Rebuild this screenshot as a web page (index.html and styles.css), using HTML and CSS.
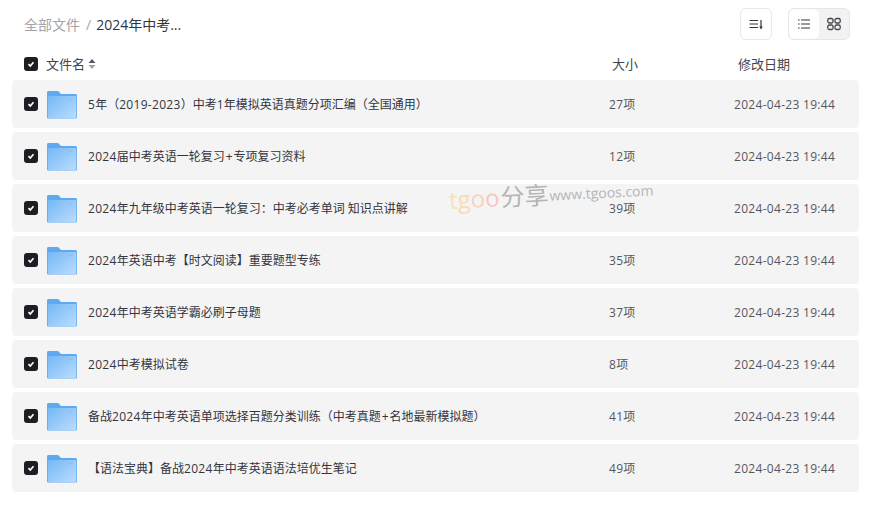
FILE: index.html
```html
<!DOCTYPE html>
<html lang="zh-CN">
<head>
<meta charset="utf-8">
<title>文件列表</title>
<link rel="stylesheet" href="styles.css">
</head>
<body>
<svg class="defs" width="0" height="0" aria-hidden="true">
  <defs>
    <linearGradient id="fg" x1="0" y1="0" x2="1" y2="1">
      <stop offset="0" stop-color="#74b8f6"/>
      <stop offset="1" stop-color="#bbdcfd"/>
    </linearGradient>
    <symbol id="folder" viewBox="0 0 30 30">
      <path d="M0 2.500C0 1.500.7 1 1.500 1h8.800c.7 0 1.200.3 1.700.8L14 4h14.500c.9 0 1.500.6 1.500 1.500V27c0 1-.6 1.600-1.500 1.600h-27C.6 28.600 0 28 0 27z" fill="#5eaaf0"/>
      <path d="M.8 7.300c0-.8.5-1.300 1.300-1.300h26.400c.5 0 .8.300.8.800V27c0 .7-.4 1-1 1H2c-.7 0-1.200-.4-1.200-1.100z" fill="url(#fg)"/>
      <rect x="22" y="8.500" width="4" height="2" fill="#8cc3f5"/>
    </symbol>
    <symbol id="check" viewBox="0 0 14 14">
      <path d="M4.500 7.200l1.800 1.800L9.500 5.300" fill="none" stroke="#fff" stroke-width="1.700"/>
    </symbol>
  </defs>
</svg>
<main class="page">
  <header class="topbar">
    <nav class="crumbs">
      <span class="crumb-root">全部文件</span>
      <span class="crumb-sep">/</span>
      <span class="crumb-current">2024年中考...</span>
    </nav>
    <div class="tools">
      <button class="sort-btn" aria-label="排序">
        <svg width="16" height="16" viewBox="0 0 16 16"><path d="M1.500 4.500h8.500M1.500 8h8.500M1.500 11.500h8.500" stroke="#33353c" stroke-width="1.100" fill="none"/><path d="M13 4v8" stroke="#33353c" stroke-width="1.200"/><path d="M11.200 10.500h3.600L13 13.500z" fill="#33353c"/></svg>
      </button>
      <div class="view-switch">
        <button class="view-btn is-active" aria-label="列表">
          <svg width="14" height="14" viewBox="0 0 14 14"><path d="M4 3h9M4 7h9M4 11h9" stroke="#33353c" stroke-width="1.100" fill="none"/><path d="M1 3h1.600M1 7h1.600M1 11h1.600" stroke="#33353c" stroke-width="1.100" fill="none"/></svg>
        </button>
        <button class="view-btn" aria-label="网格">
          <svg width="14" height="14" viewBox="0 0 14 14" fill="none" stroke="#44464c" stroke-width="1.300"><rect x=".8" y="1.500" width="5.200" height="4.500" rx="1.500"/><rect x="8" y="1.500" width="5.200" height="4.500" rx="1.500"/><rect x=".8" y="8" width="5.200" height="4.500" rx="1.500"/><rect x="8" y="8" width="5.200" height="4.500" rx="1.500"/></svg>
        </button>
      </div>
    </div>
  </header>

  <div class="list-head">
    <span class="box head-box"><svg width="14" height="14"><use href="#check"/></svg></span>
    <span class="head-name">文件名
      <svg class="sort-mark" width="8" height="12" viewBox="0 0 8 12"><path d="M4 1l3.500 4H.5z" fill="#55575d"/><path d="M4 11L.5 7h7z" fill="#a0a2a6"/></svg>
    </span>
    <span class="head-size">大小</span>
    <span class="head-date">修改日期</span>
  </div>

  <ul class="rows">
    <li class="row"><span class="box"><svg width="14" height="14"><use href="#check"/></svg></span><svg class="folder" width="30" height="30"><use href="#folder"/></svg><span class="name"><span class="num">5</span>年（<span class="num">2019-2023</span>）中考<span class="num">1</span>年模拟英语真题分项汇编（全国通用）</span><span class="size">27项</span><span class="date">2024-04-23 19:44</span></li>
    <li class="row"><span class="box"><svg width="14" height="14"><use href="#check"/></svg></span><svg class="folder" width="30" height="30"><use href="#folder"/></svg><span class="name"><span class="num">2024</span>届中考英语一轮复习<span class="plus">+</span>专项复习资料</span><span class="size">12项</span><span class="date">2024-04-23 19:44</span></li>
    <li class="row"><span class="box"><svg width="14" height="14"><use href="#check"/></svg></span><svg class="folder" width="30" height="30"><use href="#folder"/></svg><span class="name"><span class="num">2024</span>年九年级中考英语一轮复习：中考必考单词 知识点讲解</span><span class="size">39项</span><span class="date">2024-04-23 19:44</span></li>
    <li class="row"><span class="box"><svg width="14" height="14"><use href="#check"/></svg></span><svg class="folder" width="30" height="30"><use href="#folder"/></svg><span class="name"><span class="num">2024</span>年英语中考【时文阅读】重要题型专练</span><span class="size">35项</span><span class="date">2024-04-23 19:44</span></li>
    <li class="row"><span class="box"><svg width="14" height="14"><use href="#check"/></svg></span><svg class="folder" width="30" height="30"><use href="#folder"/></svg><span class="name"><span class="num">2024</span>年中考英语学霸必刷子母题</span><span class="size">37项</span><span class="date">2024-04-23 19:44</span></li>
    <li class="row"><span class="box"><svg width="14" height="14"><use href="#check"/></svg></span><svg class="folder" width="30" height="30"><use href="#folder"/></svg><span class="name"><span class="num">2024</span>中考模拟试卷</span><span class="size">8项</span><span class="date">2024-04-23 19:44</span></li>
    <li class="row"><span class="box"><svg width="14" height="14"><use href="#check"/></svg></span><svg class="folder" width="30" height="30"><use href="#folder"/></svg><span class="name">备战<span class="num">2024</span>年中考英语单项选择百题分类训练（中考真题<span class="plus">+</span>名地最新模拟题）</span><span class="size">41项</span><span class="date">2024-04-23 19:44</span></li>
    <li class="row"><span class="box"><svg width="14" height="14"><use href="#check"/></svg></span><svg class="folder" width="30" height="30"><use href="#folder"/></svg><span class="name">【语法宝典】备战<span class="num">2024</span>年中考英语语法培优生笔记</span><span class="size">49项</span><span class="date">2024-04-23 19:44</span></li>
  </ul>

  <div class="watermark"><span class="wm-t">t</span><span class="wm-g">g</span><span class="wm-o1">o</span><span class="wm-o2">o</span><span class="wm-cn">分享</span><span class="wm-url">www.tgoos.com</span></div>
</main>
</body>
</html>
```

FILE: styles.css
```css
* { box-sizing: border-box; }
html, body { margin: 0; padding: 0; background: #fff; }
body {
  width: 874px;
  height: 514px;
  overflow: hidden;
  font-family: "Open Sans", "Noto Sans CJK SC", sans-serif;
  font-size: 12px;
  color: #33353c;
}
.defs { position: absolute; }
.page { position: relative; padding: 8px 15px 0 12px; }
.topbar {
  display: flex;
  justify-content: space-between;
  align-items: center;
  height: 32px;
  padding: 0 9px 0 12px;
}
.crumbs { display: flex; align-items: center; font-size: 14px; }
.crumb-root { color: #a3a4a8; }
.crumb-sep { color: #a3a4a8; margin: 0 5px 0 6px; }
.crumb-current { color: #33353c; }
.tools { display: flex; gap: 16px; }
.sort-btn {
  width: 32px;
  height: 32px;
  padding: 0;
  display: flex;
  align-items: center;
  justify-content: center;
  background: #fff;
  border: 1px solid #e8e8ea;
  border-radius: 6px;
}
.view-switch {
  display: flex;
  width: 62px;
  height: 32px;
  background: #f2f2f3;
  border: 1px solid #e6e6e8;
  border-radius: 6px;
  overflow: hidden;
}
.view-btn {
  flex: 1;
  padding: 0;
  display: flex;
  align-items: center;
  justify-content: center;
  border: 0;
  background: transparent;
  border-radius: 6px;
}
.view-btn.is-active { background: #fff; }
.list-head {
  display: flex;
  align-items: center;
  height: 40px;
  padding: 6px 0 0 12px;
  font-size: 13px;
  color: #44464c;
}
.box {
  flex: none;
  width: 14px;
  height: 14px;
  display: block;
  background: #1d1e23;
  border-radius: 3px;
}
.box svg { display: block; }
.head-box { margin-top: 2px; }
.head-name {
  width: 566px;
  margin-left: 8px;
  display: flex;
  align-items: center;
  gap: 3px;
}
.sort-mark { margin-top: 1px; }
.head-size { width: 126px; }
.rows { list-style: none; margin: 0; padding: 0; display: flex; flex-direction: column; gap: 4px; }
.row {
  display: flex;
  align-items: center;
  height: 48px;
  padding-left: 12px;
  background: #f4f4f5;
  border-radius: 4px;
}
.folder { flex: none; margin: 2px 0 0 9px; }
.name { width: 521px; margin-left: 11px; white-space: nowrap; }
.num { letter-spacing: .3px; }
.plus { padding: 0 1px; }
.size { width: 125px; color: #55575e; letter-spacing: .3px; }
.date { color: #55575e; letter-spacing: .3px; }
.watermark {
  position: absolute;
  left: 449px;
  top: 181px;
  display: flex;
  align-items: baseline;
  white-space: nowrap;
  font-family: "Open Sans", "Noto Sans CJK SC", sans-serif;
  transform: rotate(-3deg);
  transform-origin: left center;
  opacity: .6;
  pointer-events: none;
}
.wm-t { font-size: 24px; color: #f5d98c; }
.wm-g { font-size: 24px; color: #f7cf94; }
.wm-o1 { font-size: 24px; color: #f9bf9c; }
.wm-o2 { font-size: 24px; color: #fbaaa0; margin-right: 1px; }
.wm-cn { font-size: 24px; color: #8a8a8a; margin-right: 1px; }
.wm-url { font-size: 14px; color: #8a8a8a; transform: translateY(-3px); }
```
